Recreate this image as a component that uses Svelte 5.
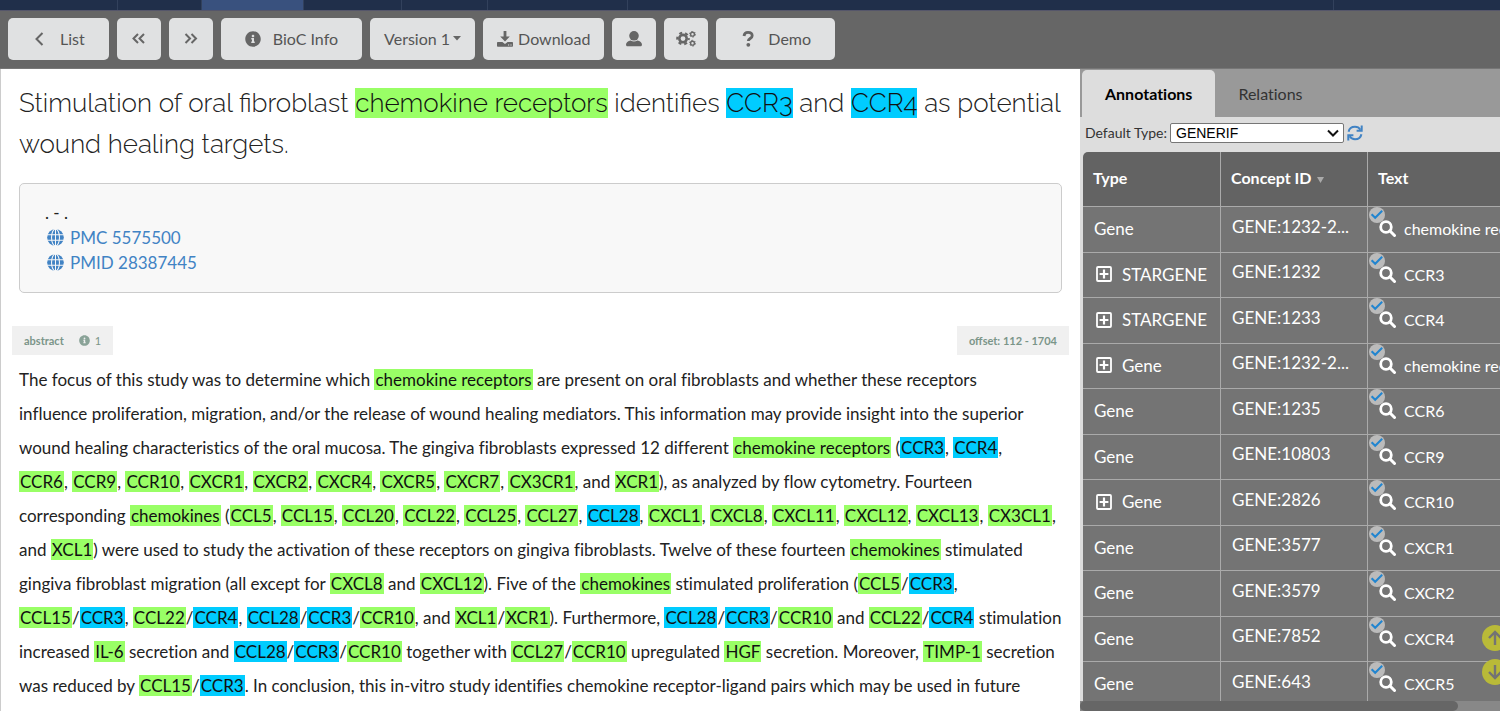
<script lang="ts">
  type Row = { type: string; concept: string; text: string; group?: boolean };

  const navWidths = [118, 84, 102, 98, 86, 140, 706];

  // {…} marks a gene family, […] marks a gene
  const title =
    'Stimulation of oral fibroblast {chemokine receptors} identifies [CCR3] and [CCR4] as potential wound healing targets.';
  const abstract = [
    'The focus of this study was to determine which {chemokine receptors} are present on oral fibroblasts and whether these receptors',
    'influence proliferation, migration, and/or the release of wound healing mediators. This information may provide insight into the superior',
    'wound healing characteristics of the oral mucosa. The gingiva fibroblasts expressed 12 different {chemokine receptors} ([CCR3], [CCR4],',
    '{CCR6}, {CCR9}, {CCR10}, {CXCR1}, {CXCR2}, {CXCR4}, {CXCR5}, {CXCR7}, {CX3CR1}, and {XCR1}), as analyzed by flow cytometry. Fourteen',
    'corresponding {chemokines} ({CCL5}, {CCL15}, {CCL20}, {CCL22}, {CCL25}, {CCL27}, [CCL28], {CXCL1}, {CXCL8}, {CXCL11}, {CXCL12}, {CXCL13}, {CX3CL1},',
    'and {XCL1}) were used to study the activation of these receptors on gingiva fibroblasts. Twelve of these fourteen {chemokines} stimulated',
    'gingiva fibroblast migration (all except for {CXCL8} and {CXCL12}). Five of the {chemokines} stimulated proliferation ({CCL5}/[CCR3],',
    '{CCL15}/[CCR3], {CCL22}/[CCR4], [CCL28]/[CCR3]/{CCR10}, and {XCL1}/{XCR1}). Furthermore, [CCL28]/[CCR3]/{CCR10} and {CCL22}/[CCR4] stimulation',
    'increased {IL-6} secretion and [CCL28]/[CCR3]/{CCR10} together with {CCL27}/{CCR10} upregulated {HGF} secretion. Moreover, {TIMP-1} secretion',
    'was reduced by {CCL15}/[CCR3]. In conclusion, this in-vitro study identifies chemokine receptor-ligand pairs which may be used in future',
  ].join('\n');

  const rows: Row[] = [
    { type: 'Gene', concept: 'GENE:1232-2...', text: 'chemokine receptors' },
    { type: 'STARGENE', concept: 'GENE:1232', text: 'CCR3', group: true },
    { type: 'STARGENE', concept: 'GENE:1233', text: 'CCR4', group: true },
    { type: 'Gene', concept: 'GENE:1232-2...', text: 'chemokine receptors', group: true },
    { type: 'Gene', concept: 'GENE:1235', text: 'CCR6' },
    { type: 'Gene', concept: 'GENE:10803', text: 'CCR9' },
    { type: 'Gene', concept: 'GENE:2826', text: 'CCR10', group: true },
    { type: 'Gene', concept: 'GENE:3577', text: 'CXCR1' },
    { type: 'Gene', concept: 'GENE:3579', text: 'CXCR2' },
    { type: 'Gene', concept: 'GENE:7852', text: 'CXCR4' },
    { type: 'Gene', concept: 'GENE:643', text: 'CXCR5' },
  ];

  let tab = $state('annotations');

  function parse(source: string) {
    return source.split(/(\{[^}]+\}|\[[^\]]+\])/).map((part) => {
      if (part[0] === '{') return { text: part.slice(1, -1), kind: 'family' };
      if (part[0] === '[') return { text: part.slice(1, -1), kind: 'gene' };
      return { text: part, kind: '' };
    });
  }
</script>

{#snippet marked(source: string)}
  {#each parse(source) as part}{#if part.kind}<mark class={part.kind}>{part.text}</mark>{:else}{part.text}{/if}{/each}
{/snippet}

{#snippet infoIcon()}
  <svg class="info" viewBox="0 0 512 512" aria-hidden="true">
    <path d="M256 8C119.043 8 8 119.083 8 256c0 136.997 111.043 248 248 248s248-111.003 248-248C504 119.083 392.957 8 256 8zm0 110c23.196 0 42 18.804 42 42s-18.804 42-42 42-42-18.804-42-42 18.804-42 42-42zm56 254c0 6.627-5.373 12-12 12h-88c-6.627 0-12-5.373-12-12v-24c0-6.627 5.373-12 12-12h12v-64h-12c-6.627 0-12-5.373-12-12v-24c0-6.627 5.373-12 12-12h64c6.627 0 12 5.373 12 12v100h12c6.627 0 12 5.373 12 12v24z" />
  </svg>
{/snippet}

{#snippet globeIcon()}
  <svg class="globe" viewBox="0 0 18 18" aria-hidden="true">
    <circle cx="9" cy="9" r="8.8" />
    <g fill="none" stroke="#f8f8f8" stroke-width="1.1">
      <ellipse cx="9" cy="9" rx="4.2" ry="9" />
      <path d="M9 0v18M0 6.1h18M0 11.9h18" />
    </g>
  </svg>
{/snippet}

<div class="page">
  <nav class="site-nav">
    {#each navWidths as width, i}
      <span class:current={i === 2} style="width: {width / 15}%"></span>
    {/each}
  </nav>

  <div class="toolbar">
    <button type="button" class="wide">
      <svg width="16" height="16" viewBox="0 0 16 16" aria-hidden="true">
        <path class="line" d="M10.500 2 4.500 8l6 6" />
      </svg>
      List
    </button>
    <button type="button" class="icon" aria-label="Previous document">
      <svg width="14" height="14" viewBox="0 0 14 14" aria-hidden="true">
        <path class="line" d="M6 2 1.500 6.500 6 11M12 2 7.500 6.500 12 11" />
      </svg>
    </button>
    <button type="button" class="icon" aria-label="Next document">
      <svg width="14" height="14" viewBox="0 0 14 14" aria-hidden="true">
        <path class="line" d="M1.500 2 6 6.500 1.500 11M7.500 2 12 6.500 7.500 11" />
      </svg>
    </button>
    <button type="button" class="wide">
      {@render infoIcon()}
      BioC Info
    </button>
    <button type="button" class="version">
      Version 1
      <svg width="8" height="5" viewBox="0 0 8 5" aria-hidden="true"><path d="M0 0h8L4 4.600z" /></svg>
    </button>
    <button type="button" class="download">
      <svg width="16" height="16" viewBox="0 0 16 16" aria-hidden="true">
        <path d="M6.600 0h2.800v5.500h3.400L8 10.400 3.200 5.500h3.400z" />
        <path fill-rule="evenodd" d="M.8 11h4.600L8 13l2.600-2h4.600c.5 0 .8.300.8.800V15c0 .5-.3.800-.8.800H.8c-.5 0-.8-.3-.8-.8v-3.200c0-.5.300-.8.800-.8zM11 13.400v1.200h1.200v-1.200zm2.400 0v1.200h1.200v-1.200z" />
      </svg>
      Download
    </button>
    <button type="button" class="icon" aria-label="User">
      <svg width="16" height="16" viewBox="0 0 16 16" aria-hidden="true">
        <circle cx="8" cy="4.800" r="4.800" />
        <path d="M4.600 9.400c2.200 1.300 4.600 1.300 6.800 0 2.700.4 4.600 2 4.600 4.400 0 .9-.6 1.500-1.500 1.500h-13C.6 15.300 0 14.700 0 13.800c0-2.400 1.900-4 4.600-4.400z" />
      </svg>
    </button>
    <button type="button" class="icon" aria-label="Settings">
      <svg width="20" height="16" viewBox="0 0 20 16" aria-hidden="true">
        <g fill="none" stroke="#666">
          <circle cx="7" cy="7.600" r="3.700" stroke-width="2.600" />
          <circle cx="7" cy="7.600" r="5.800" stroke-width="2" stroke-dasharray="3 3.070" stroke-dashoffset="1.500" />
          <circle cx="16.500" cy="3.200" r="1.900" stroke-width="1.400" />
          <circle cx="16.500" cy="3.200" r="2.900" stroke-width="1" stroke-dasharray="1.500 1.540" />
          <circle cx="16.500" cy="12.200" r="1.900" stroke-width="1.400" />
          <circle cx="16.500" cy="12.200" r="2.900" stroke-width="1" stroke-dasharray="1.500 1.540" />
        </g>
      </svg>
    </button>
    <button type="button" class="wide">
      <svg width="16" height="16" viewBox="0 0 16 16" aria-hidden="true">
        <path d="M4 5C4.300 2.400 5.800 1.400 8 1.400c2.400 0 4.200 1.300 4.200 3.300 0 2.900-3.900 2.700-3.900 5.400" fill="none" stroke="#666" stroke-width="2.800" />
        <circle cx="8.300" cy="13.800" r="1.900" />
      </svg>
      Demo
    </button>
  </div>

  <div class="content">
    <main class="document">
      <h1>{@render marked(title)}</h1>

      <div class="source">
        <div>. - .</div>
        <a href="#pmc">{@render globeIcon()}PMC 5575500</a>
        <a href="#pmid">{@render globeIcon()}PMID 28387445</a>
      </div>

      <div class="passage-head">
        <span class="label">abstract <span class="count">{@render infoIcon()}1</span></span>
        <span class="label">offset: 112 - 1704</span>
      </div>
      <p class="passage">{@render marked(abstract)}</p>
    </main>

    <aside class="side">
      <div class="tabs" role="tablist">
        <button type="button" role="tab" aria-selected={tab === 'annotations'} onclick={() => (tab = 'annotations')}>
          Annotations
        </button>
        <button type="button" role="tab" aria-selected={tab === 'relations'} onclick={() => (tab = 'relations')}>
          Relations
        </button>
      </div>

      <div class="default-type">
        <label for="default-type">Default Type:</label>
        <div class="select">
          <select id="default-type">
            <option>GENERIF</option>
          </select>
          <svg width="12" height="8" viewBox="0 0 12 8" aria-hidden="true">
            <path d="m1 1.500 5 5 5-5" fill="none" stroke="#111" stroke-width="2" />
          </svg>
        </div>
        <button type="button" class="refresh" aria-label="Refresh">
          <svg width="16" height="16" viewBox="0 0 16 16" aria-hidden="true">
            <g fill="none" stroke="#4183c4" stroke-width="2">
              <path d="M1.600 6.800C2.200 3.600 4.800 1.800 8 1.800c2.300 0 4.200 1 5.400 2.900M14.400 9.200c-.6 3.200-3.200 5-6.400 5-2.300 0-4.200-1-5.400-2.900" />
              <path d="M14.700.6v5.100H9.600M1.300 15.400v-5.100h5.100" />
            </g>
          </svg>
        </button>
      </div>

      <div class="table-wrap">
        <table>
          <thead>
            <tr>
              <th class="type">Type</th>
              <th class="concept">
                Concept ID
                <svg width="7" height="6" viewBox="0 0 7 6" aria-hidden="true"><path d="M0 0h7L3.500 6z" /></svg>
              </th>
              <th>Text</th>
            </tr>
          </thead>
          <tbody>
            {#each rows as row}
              <tr>
                <td class="type">
                  <span class="cell">
                    {#if row.group}
                      <svg width="16" height="16" viewBox="0 0 16 16" aria-hidden="true">
                        <rect x="1" y="1" width="14" height="14" rx="1" fill="none" stroke="#fff" stroke-width="1.800" />
                        <path d="M8 3.600v8.800M3.600 8h8.800" stroke="#fff" stroke-width="2.200" />
                      </svg>
                    {/if}
                    {row.type}
                  </span>
                </td>
                <td class="concept">{row.concept}</td>
                <td class="text">
                  <svg class="check" width="16" height="16" viewBox="0 0 16 16" aria-hidden="true">
                    <circle cx="8" cy="8" r="8" fill="#bbb" />
                    <path d="m2.600 7.200 3.600 3.600 7-7" fill="none" stroke="#2185d0" stroke-width="2" />
                  </svg>
                  <span class="cell">
                    <svg width="17" height="17" viewBox="0 0 17 17" aria-hidden="true">
                      <circle cx="7" cy="7" r="5.300" fill="none" stroke="#fff" stroke-width="2.800" />
                      <path d="m10.800 10.800 4.700 4.700" stroke="#fff" stroke-width="3" stroke-linecap="round" />
                    </svg>
                    {row.text}
                  </span>
                </td>
              </tr>
            {/each}
          </tbody>
        </table>
      </div>
      <div class="scrollbar"><div class="thumb"></div></div>

      <div class="jump">
        <button type="button" aria-label="Previous annotation">
          <svg width="16" height="16" viewBox="0 0 16 16" aria-hidden="true">
            <path d="M8 15V2M2 8l6-6 6 6" />
          </svg>
        </button>
        <button type="button" aria-label="Next annotation">
          <svg width="16" height="16" viewBox="0 0 16 16" aria-hidden="true">
            <path d="M8 1v13M2 8l6 6 6-6" />
          </svg>
        </button>
      </div>
    </aside>
  </div>
</div>

<style>
  :global(body) {
    margin: 0;
    overflow: hidden;
  }
  .page,
  .page button {
    font-family: Lato, 'Liberation Sans', sans-serif;
  }
  .page {
    display: flex;
    flex-direction: column;
    height: 100vh;
    color: #222;
    background: #fff;
  }
  svg {
    flex: none;
  }

  .site-nav {
    display: flex;
    flex: none;
    height: 10px;
    background: #202f4a;
    border-bottom: 1px solid #55566a;
  }
  .site-nav span {
    box-sizing: border-box;
    border-right: 1px solid #32415c;
  }
  .site-nav .current {
    background: #39517e;
  }

  .toolbar {
    display: flex;
    flex: none;
    gap: 8px;
    padding: 7px 8px 8px;
    background: #666;
    border-bottom: 1px solid #777;
  }
  .toolbar button {
    display: flex;
    align-items: center;
    justify-content: center;
    height: 42px;
    padding: 0 14px 1px;
    border: 0;
    border-radius: 5px;
    background: #e0e1e2;
    color: #555;
    font-size: 16px;
    cursor: pointer;
  }
  .toolbar svg {
    fill: #666;
  }
  .toolbar .line {
    fill: none;
    stroke: #666;
    stroke-width: 2;
  }
  .toolbar .wide {
    gap: 12px;
    padding: 0 24px 1px;
  }
  .toolbar .icon {
    width: 44px;
    padding: 0;
  }
  .toolbar .version {
    gap: 3px;
  }
  .toolbar .download {
    gap: 5px;
  }
  .toolbar .info {
    width: 16px;
    height: 16px;
  }

  .content {
    display: flex;
    flex: 1;
    min-height: 0;
  }
  .document {
    box-sizing: border-box;
    width: 72%;
    padding: 14px 18px 0;
    border-left: 1px solid #ccc;
    overflow: hidden;
  }
  h1 {
    margin: 0 0 18px;
    font-family: Raleway, Lato, sans-serif;
    font-size: 26px;
    font-weight: 300;
    line-height: 41px;
  }
  mark {
    color: #111;
  }
  .family {
    background: #9f6;
  }
  .gene {
    background: #0cf;
  }

  .source {
    display: flex;
    flex-direction: column;
    padding: 16px 25px 17px;
    border: 1px solid #ccc;
    border-radius: 5px;
    background: #f8f8f8;
    font-size: 17px;
    line-height: 25px;
  }
  .source a {
    display: flex;
    align-items: center;
    gap: 6px;
    color: #4183c4;
    text-decoration: none;
  }
  .globe {
    width: 17px;
    height: 17px;
    margin-left: 2px;
    fill: #4183c4;
  }

  .passage-head {
    display: flex;
    justify-content: space-between;
    margin: 33px -7px 8px;
  }
  .label {
    display: flex;
    align-items: center;
    gap: 15px;
    height: 29px;
    padding: 0 12px;
    background: #f0f0f0;
    color: #7b9589;
    font-size: 11px;
    font-weight: 700;
  }
  .count {
    display: flex;
    align-items: center;
    gap: 5px;
    font-weight: 400;
  }
  .count .info {
    width: 11px;
    height: 11px;
    fill: #8aa398;
  }
  .passage {
    margin: 0;
    font-size: 17px;
    font-variant-ligatures: none;
    line-height: 34px;
    white-space: pre-line;
  }
  .passage mark {
    padding: 0 1px;
  }

  .side {
    position: relative;
    display: flex;
    flex-direction: column;
    width: 28%;
    background: #ddd;
    overflow: hidden;
  }
  .tabs {
    display: flex;
    padding: 1px 2px 0;
    background: #999;
  }
  .tabs button {
    height: 47px;
    padding: 0 23px;
    border: 0;
    border-radius: 5px 5px 0 0;
    background: none;
    color: #333;
    font-size: 16px;
    font-variant-ligatures: none;
    cursor: pointer;
  }
  .tabs button[aria-selected='true'] {
    background: #ddd;
    color: #000;
    font-weight: 700;
  }

  .default-type {
    display: flex;
    align-items: center;
    gap: 3px;
    height: 31px;
    padding: 0 5px 4px;
    color: #333;
    font-size: 14px;
  }
  .select {
    position: relative;
    width: 174px;
  }
  .select svg {
    position: absolute;
    top: 6px;
    right: 5px;
    pointer-events: none;
  }
  select {
    display: block;
    width: 100%;
    height: 20px;
    padding: 0 5px;
    border: 1px solid #767676;
    border-radius: 2px;
    background: #fff;
    color: #000;
    font-family: 'Liberation Sans', sans-serif;
    font-size: 14px;
    appearance: none;
  }
  .refresh {
    display: flex;
    padding: 0;
    border: 0;
    background: none;
    cursor: pointer;
  }

  .table-wrap {
    flex: 1;
    min-height: 0;
    padding-left: 3px;
    overflow: hidden;
  }
  table {
    width: 469px;
    border-spacing: 0;
    table-layout: fixed;
    color: #fff;
    font-size: 17px;
  }
  th,
  td {
    box-sizing: border-box;
    padding: 0 10px 2px;
    border-right: 1px solid #aaa;
    border-bottom: 1px solid #aaa;
    text-align: left;
    white-space: nowrap;
  }
  th {
    height: 55px;
    padding-bottom: 4px;
    background: #636363;
    font-size: 16px;
    font-weight: 700;
  }
  th:first-child {
    border-radius: 5px 0 0 0;
  }
  th svg {
    margin-left: 2px;
    vertical-align: 1px;
    fill: #aaa;
  }
  td {
    height: 46px;
    background: #747474;
  }
  tr:nth-child(even) td {
    height: 45px;
  }
  .type {
    width: 138px;
  }
  .concept {
    width: 147px;
  }
  td.type {
    padding-left: 11px;
  }
  td.concept {
    padding: 0 11px 7px;
  }
  .cell {
    display: flex;
    align-items: center;
    gap: 8px;
  }
  .type .cell svg {
    margin: 0 2px;
  }
  td.text {
    position: relative;
    padding-left: 11px;
    font-size: 16px;
  }
  .check {
    position: absolute;
    top: 0;
    left: 1px;
  }

  .scrollbar {
    height: 10px;
    background: #888;
  }
  .thumb {
    width: 90%;
    height: 100%;
    border-radius: 5px;
    background: #666;
  }

  .jump {
    position: absolute;
    right: -8px;
    bottom: 26px;
    display: flex;
    flex-direction: column;
    gap: 8px;
  }
  .jump button {
    display: flex;
    align-items: center;
    justify-content: center;
    width: 26px;
    height: 26px;
    padding: 0;
    border: 0;
    border-radius: 50%;
    background: #b9ba38;
    cursor: pointer;
  }
  .jump path {
    fill: none;
    stroke: #747474;
    stroke-width: 2.4;
  }
</style>
